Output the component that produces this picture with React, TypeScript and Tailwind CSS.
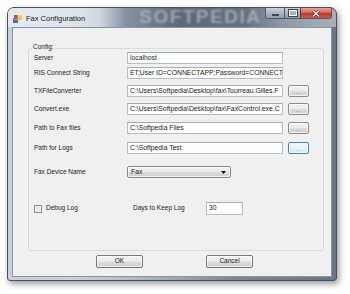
import React from 'react';

const font = "font-['Liberation_Sans',Arial,sans-serif]";

const btnFace =
  'flex items-center rounded-[2px] border bg-[linear-gradient(180deg,#f3f3f3_0%,#ebebeb_48%,#dddddd_52%,#cfcfcf_100%)] shadow-[inset_0_0_0_1px_rgba(255,255,255,0.7)]';

function TextBox({ value, className = '' }: { value: string; className?: string }) {
  return (
    <div
      className={`flex h-[12px] items-center overflow-hidden whitespace-nowrap border border-[#b5bec9] border-t-[#a3acb8] bg-white pl-[2px] text-[6.8px] leading-none text-[#1b1b1b] ${className}`}
    >
      {value}
    </div>
  );
}

function Browse({ focused = false }: { focused?: boolean }) {
  return (
    <div
      className={`${btnFace} ml-[5px] h-[12px] w-[21px] justify-center ${
        focused ? 'border-[#3c8bc8] bg-[linear-gradient(180deg,#f4f9fd_0%,#e8f1f9_50%,#d9e8f5_100%)]' : 'border-[#8c8c8c]'
      }`}
    >
      <span className="mt-[2px] text-[5px] leading-none tracking-[0.5px] text-[#6d6d6d]">...</span>
    </div>
  );
}

type Row = { label: string; value: string; browse?: boolean; focused?: boolean; mt: string };

const rows: Row[] = [
  { label: 'Server', value: 'localhost', mt: 'mt-[3px]' },
  { label: 'RIS Connect String', value: 'ET;User ID=CONNECTAPP;Password=CONNECT', mt: 'mt-[3px]' },
  { label: 'TXFileConverter', value: 'C:\\Users\\Softpedia\\Desktop\\fax\\Tourreau.Gilles.F', browse: true, mt: 'mt-[6px]' },
  { label: 'Convert.exe', value: 'C:\\Users\\Softpedia\\Desktop\\fax\\FaxControl.exe.C', browse: true, mt: 'mt-[6px]' },
  { label: 'Path to Fax files', value: 'C:\\Softpedia Files', browse: true, mt: 'mt-[7px]' },
  { label: 'Path for Logs', value: 'C:\\Softpedia Test', browse: true, focused: true, mt: 'mt-[8px]' },
];

function FormIcon() {
  return (
    <svg width="9" height="8" viewBox="0 0 9 8">
      <rect x="0" y="3" width="5" height="5" fill="#3b6fd0" />
      <rect x="0.5" y="3.5" width="4" height="1.2" fill="#8fb3ef" />
      <rect x="1" y="0" width="4" height="3.5" fill="#e0412c" />
      <rect x="4.5" y="0" width="4.5" height="5" fill="#f3c431" />
      <rect x="5" y="0.5" width="3.5" height="1" fill="#fde68a" />
    </svg>
  );
}

export default function App() {
  return (
    <div className={`h-[294px] w-[350px] overflow-hidden bg-white pl-[7px] pt-[7px] ${font}`}>
      <div className="flex h-[274px] w-[330px] flex-col rounded-t-[7px] rounded-b-[3px] border border-[#46525f] bg-[linear-gradient(90deg,#c4d0dc_0%,#c9d4df_20%,#a3b0be_45%,#7b8794_70%,#6b7682_100%)] shadow-[2px_3px_6px_rgba(0,0,0,0.4)]">
        {/* title bar */}
        <div className="flex h-[19px] rounded-t-[6px] bg-[linear-gradient(90deg,#e4eaf0_0%,#dbe3ea_22%,#cfd8e1_28%,#8391a1_36%,#5d6875_52%,#65717e_72%,#8e99a5_84%,#a9b2bb_100%)] pl-[5px] pr-[4px]">
          <div className="flex items-center pt-[3px]">
            <FormIcon />
            <span className="ml-[4px] text-[7.5px] leading-none text-[#1b1b1b]">Fax Configuration</span>
          </div>
          <span className="ml-[54px] mt-[-1px] select-none text-[19px] font-bold leading-none tracking-[1.5px] text-[#b4bfcb] opacity-70 blur-[1.2px]">
            SOFTPEDIA
          </span>
          <div className="ml-auto flex h-[11px] self-start overflow-hidden rounded-b-[3px] border border-t-0 border-[#4f5a66]">
            <div className="flex w-[18px] items-end justify-center bg-[linear-gradient(180deg,#c9d1da_0%,#aab5c1_50%,#8e9aa8_100%)] pb-[2px]">
              <div className="h-[2px] w-[7px] border border-[#3d4650] bg-white" />
            </div>
            <div className="flex w-[16px] items-center justify-center border-l border-[#4f5a66] bg-[linear-gradient(180deg,#c9d1da_0%,#aab5c1_50%,#8e9aa8_100%)]">
              <div className="h-[6px] w-[8px] border-[1.5px] border-white outline outline-1 outline-[#3d4650]" />
            </div>
            <div className="flex w-[31px] items-center justify-center border-l border-[#6b2a22] bg-[linear-gradient(180deg,#e6a598_0%,#d46a59_45%,#c23a28_55%,#d0584a_100%)]">
              <svg width="8" height="7" viewBox="0 0 8 7">
                <path d="M1 0.8 L7 6.2 M7 0.8 L1 6.2" stroke="#5a1a12" strokeWidth="2.6" />
                <path d="M1 0.8 L7 6.2 M7 0.8 L1 6.2" stroke="#ffffff" strokeWidth="1.5" />
              </svg>
            </div>
          </div>
        </div>

        {/* client area */}
        <div className="mx-[4px] flex h-[250px] flex-col border border-[#8597aa] bg-[#f0f0f0] text-[#1b1b1b]">
          <div className="relative ml-[15px] mt-[20px] flex h-[203px] w-[296px] flex-col rounded-[3px] border border-[#d5dbe0]">
            <span className="absolute left-[3px] top-[-5px] bg-[#f0f0f0] px-[1px] text-[6.5px] leading-none">Config:</span>
            {rows.map((r) => (
              <div key={r.label} className={`flex h-[12px] items-center ${r.mt}`}>
                <span className="w-[98px] pl-[5px] text-[6.5px] leading-none">{r.label}</span>
                <TextBox value={r.value} className="w-[156px]" />
                {r.browse && <Browse focused={r.focused} />}
              </div>
            ))}

            <div className="mt-[12px] flex h-[12px] items-center">
              <span className="w-[98px] pl-[5px] text-[6.5px] leading-none">Fax Device Name</span>
              <div className={`${btnFace} h-[12px] w-[104px] justify-between border-[#8c8c8c] pl-[3px] pr-[4px]`}>
                <span className="text-[6.8px] leading-none">Fax</span>
                <svg width="5" height="3" viewBox="0 0 5 3">
                  <path d="M0 0 H5 L2.5 3 Z" fill="#111" />
                </svg>
              </div>
            </div>

            <div className="mt-[24px] flex h-[13px] items-center">
              <div className="flex w-[104px] items-center pl-[5px]">
                <div className="h-[8px] w-[8px] border border-[#8f8f8f] bg-[linear-gradient(135deg,#d3d3d3_0%,#ececec_60%,#f7f7f7_100%)] shadow-[inset_0_0_0_1px_#f4f4f4]" />
                <span className="ml-[4px] text-[6.5px] leading-none">Debug Log</span>
              </div>
              <span className="w-[73px] text-[6.5px] leading-none">Days to Keep Log</span>
              <TextBox value="30" className="h-[13px] w-[37px]" />
            </div>
          </div>

          <div className="mt-[4px] flex pl-[83px]">
            <div className={`${btnFace} h-[13px] w-[47px] justify-center border-[#7a7a7a] text-[6.5px] leading-none`}>OK</div>
            <div className={`${btnFace} ml-[63px] h-[13px] w-[47px] justify-center border-[#7a7a7a] text-[6.5px] leading-none`}>Cancel</div>
          </div>
        </div>
      </div>
    </div>
  );
}
